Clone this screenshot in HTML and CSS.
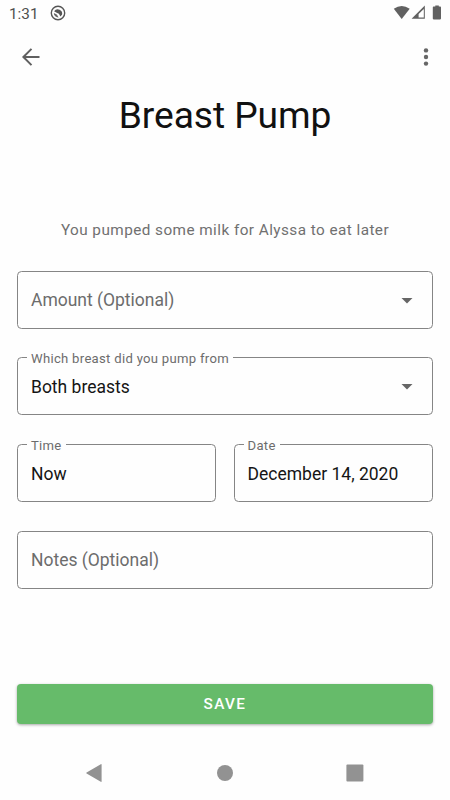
FILE: index.html
```html
<!DOCTYPE html>
<html lang="en">
<head>
<meta charset="utf-8">
<title>Breast Pump</title>
<link rel="stylesheet" href="styles.css">
</head>
<body>
<div class="screen">
  <div class="status">
    <span class="clock">1:31</span>
    <svg class="notice" width="16" height="16" viewBox="0 0 16 16"><circle cx="8" cy="8" r="6.7" fill="none" stroke="#555" stroke-width="1.4"/><path d="M4.1 6.2A4.4 4.4 0 0 1 12 9.8L10.4 11.4 8.9 8.8 6.7 7.7z" fill="#555"/><path d="M3.8 8l3 1.4 1.8 3A4.4 4.4 0 0 1 3.8 8z" fill="#666"/></svg>
    <svg class="system" width="50" height="16" viewBox="0 0 50 16"><path d="M0.8 3.8Q8.7-1.8 16.7 3.8L8.7 14z" fill="#616161"/><path d="M31.8.6V13.7H18.6z" fill="#616161"/><path d="M30.8 4V12.6H25.6V8.9z" fill="#fff"/><path d="M39.8 2.4q0-.8.8-.8h1.7V.6h3.5v1h1.4q.8 0 .8.8v11.2q0 .8-.8.8h-6.6q-.8 0-.8-.8z" fill="#616161"/></svg>
  </div>
  <div class="toolbar">
    <svg width="20" height="20" viewBox="0 0 20 20" fill="none" stroke="#606060" stroke-width="2"><path d="M18.5 10H3M10.5 1.9L2.4 10l8.1 8.1"/></svg>
    <svg width="6" height="20" viewBox="0 0 6 20" fill="#666"><circle cx="3" cy="3.4" r="2.2"/><circle cx="3" cy="10" r="2.2"/><circle cx="3" cy="16.6" r="2.2"/></svg>
  </div>
  <h1>Breast Pump</h1>
  <p class="summary">You pumped some milk for Alyssa to eat later</p>
  <form class="form">
    <fieldset class="field"><span class="hint">Amount (Optional)</span><svg class="caret" width="12" height="6" viewBox="0 0 12 6"><path d="M.5 0h11L6 5.5z"/></svg></fieldset>
    <fieldset class="field"><legend>Which breast did you pump from</legend><span class="value">Both breasts</span><svg class="caret" width="12" height="6" viewBox="0 0 12 6"><path d="M.5 0h11L6 5.5z"/></svg></fieldset>
    <div class="pair">
      <fieldset class="field"><legend>Time</legend><span class="value">Now</span></fieldset>
      <fieldset class="field"><legend>Date</legend><span class="value">December 14, 2020</span></fieldset>
    </div>
    <fieldset class="field"><span class="hint">Notes (Optional)</span></fieldset>
    <button class="save" type="button">SAVE</button>
  </form>
  <div class="nav">
    <svg width="20" height="20" viewBox="0 0 20 20"><path d="M2.6 9.4L16.8 1.2q.8-.4.8.5v16.6q0 .9-.8.5L2.6 10.5q-.9-.6 0-1.1z"/></svg>
    <svg width="20" height="20" viewBox="0 0 20 20"><circle cx="10" cy="10" r="8"/></svg>
    <svg width="20" height="20" viewBox="0 0 20 20"><rect x="1.4" y="1.6" width="17" height="17" rx="1"/></svg>
  </div>
</div>
</body>
</html>
```
FILE: styles.css
```css
* { box-sizing: border-box; }
body { margin: 0; background: #fefefe; font-family: Roboto, sans-serif; }
.screen { width: 450px; height: 800px; display: flex; flex-direction: column; overflow: hidden; }
.status { height: 26px; display: flex; align-items: center; padding: 0 7px 0 9px; }
.clock { font-size: 15.3px; line-height: 26px; color: #505050; letter-spacing: 0; padding-top: 2px; width: 41px; }
.system { margin-left: auto; }
.toolbar { height: 62px; display: flex; align-items: center; justify-content: space-between; padding: 0 21px; }
h1 { margin: 0; height: 54px; line-height: 54px; text-align: center; font-size: 37.2px; font-weight: 400; color: #111; letter-spacing: -0.08px; }
.summary { margin: 76px 0 0; height: 24px; line-height: 24px; text-align: center; font-size: 15.3px; color: #707070; letter-spacing: 0.45px; }
.form { padding: 0 17.5px 0 17.4px; margin-top: 28.5px; display: flex; flex-direction: column; gap: 28.7px; }
.field { margin: 0; min-width: 0; height: 58px; padding: 0 20px 0 12.6px; border: 1px solid #858585; border-radius: 4.5px; position: relative; }
legend { height: 1px; line-height: 3px; font-size: 13.1px; color: #6c6c6c; padding: 0 4px; margin-left: -4px; letter-spacing: 0.3px; white-space: nowrap; }
.hint, .value { display: block; font-size: 17.5px; white-space: nowrap; }
.hint { color: #6c6c6c; letter-spacing: -0.01px; line-height: 56px; }
.value { color: #151515; letter-spacing: 0; line-height: 58px; }
.caret { position: absolute; right: 19px; top: 26px; fill: #666; }
.pair { display: grid; grid-template-columns: 1fr 1fr; gap: 18px; }
.save { margin: 66.5px 0 0; height: 40px; border: 0; border-radius: 4px; background: #66bb6a; color: #fff; font: 500 15.3px/41px Roboto, sans-serif; letter-spacing: 1.35px; padding: 0; box-shadow: 0 1px 3px rgba(0,0,0,.35); }
.nav { margin-top: 39.5px; display: flex; justify-content: space-between; padding: 0 85px 0 84px; fill: #929292; }
```
